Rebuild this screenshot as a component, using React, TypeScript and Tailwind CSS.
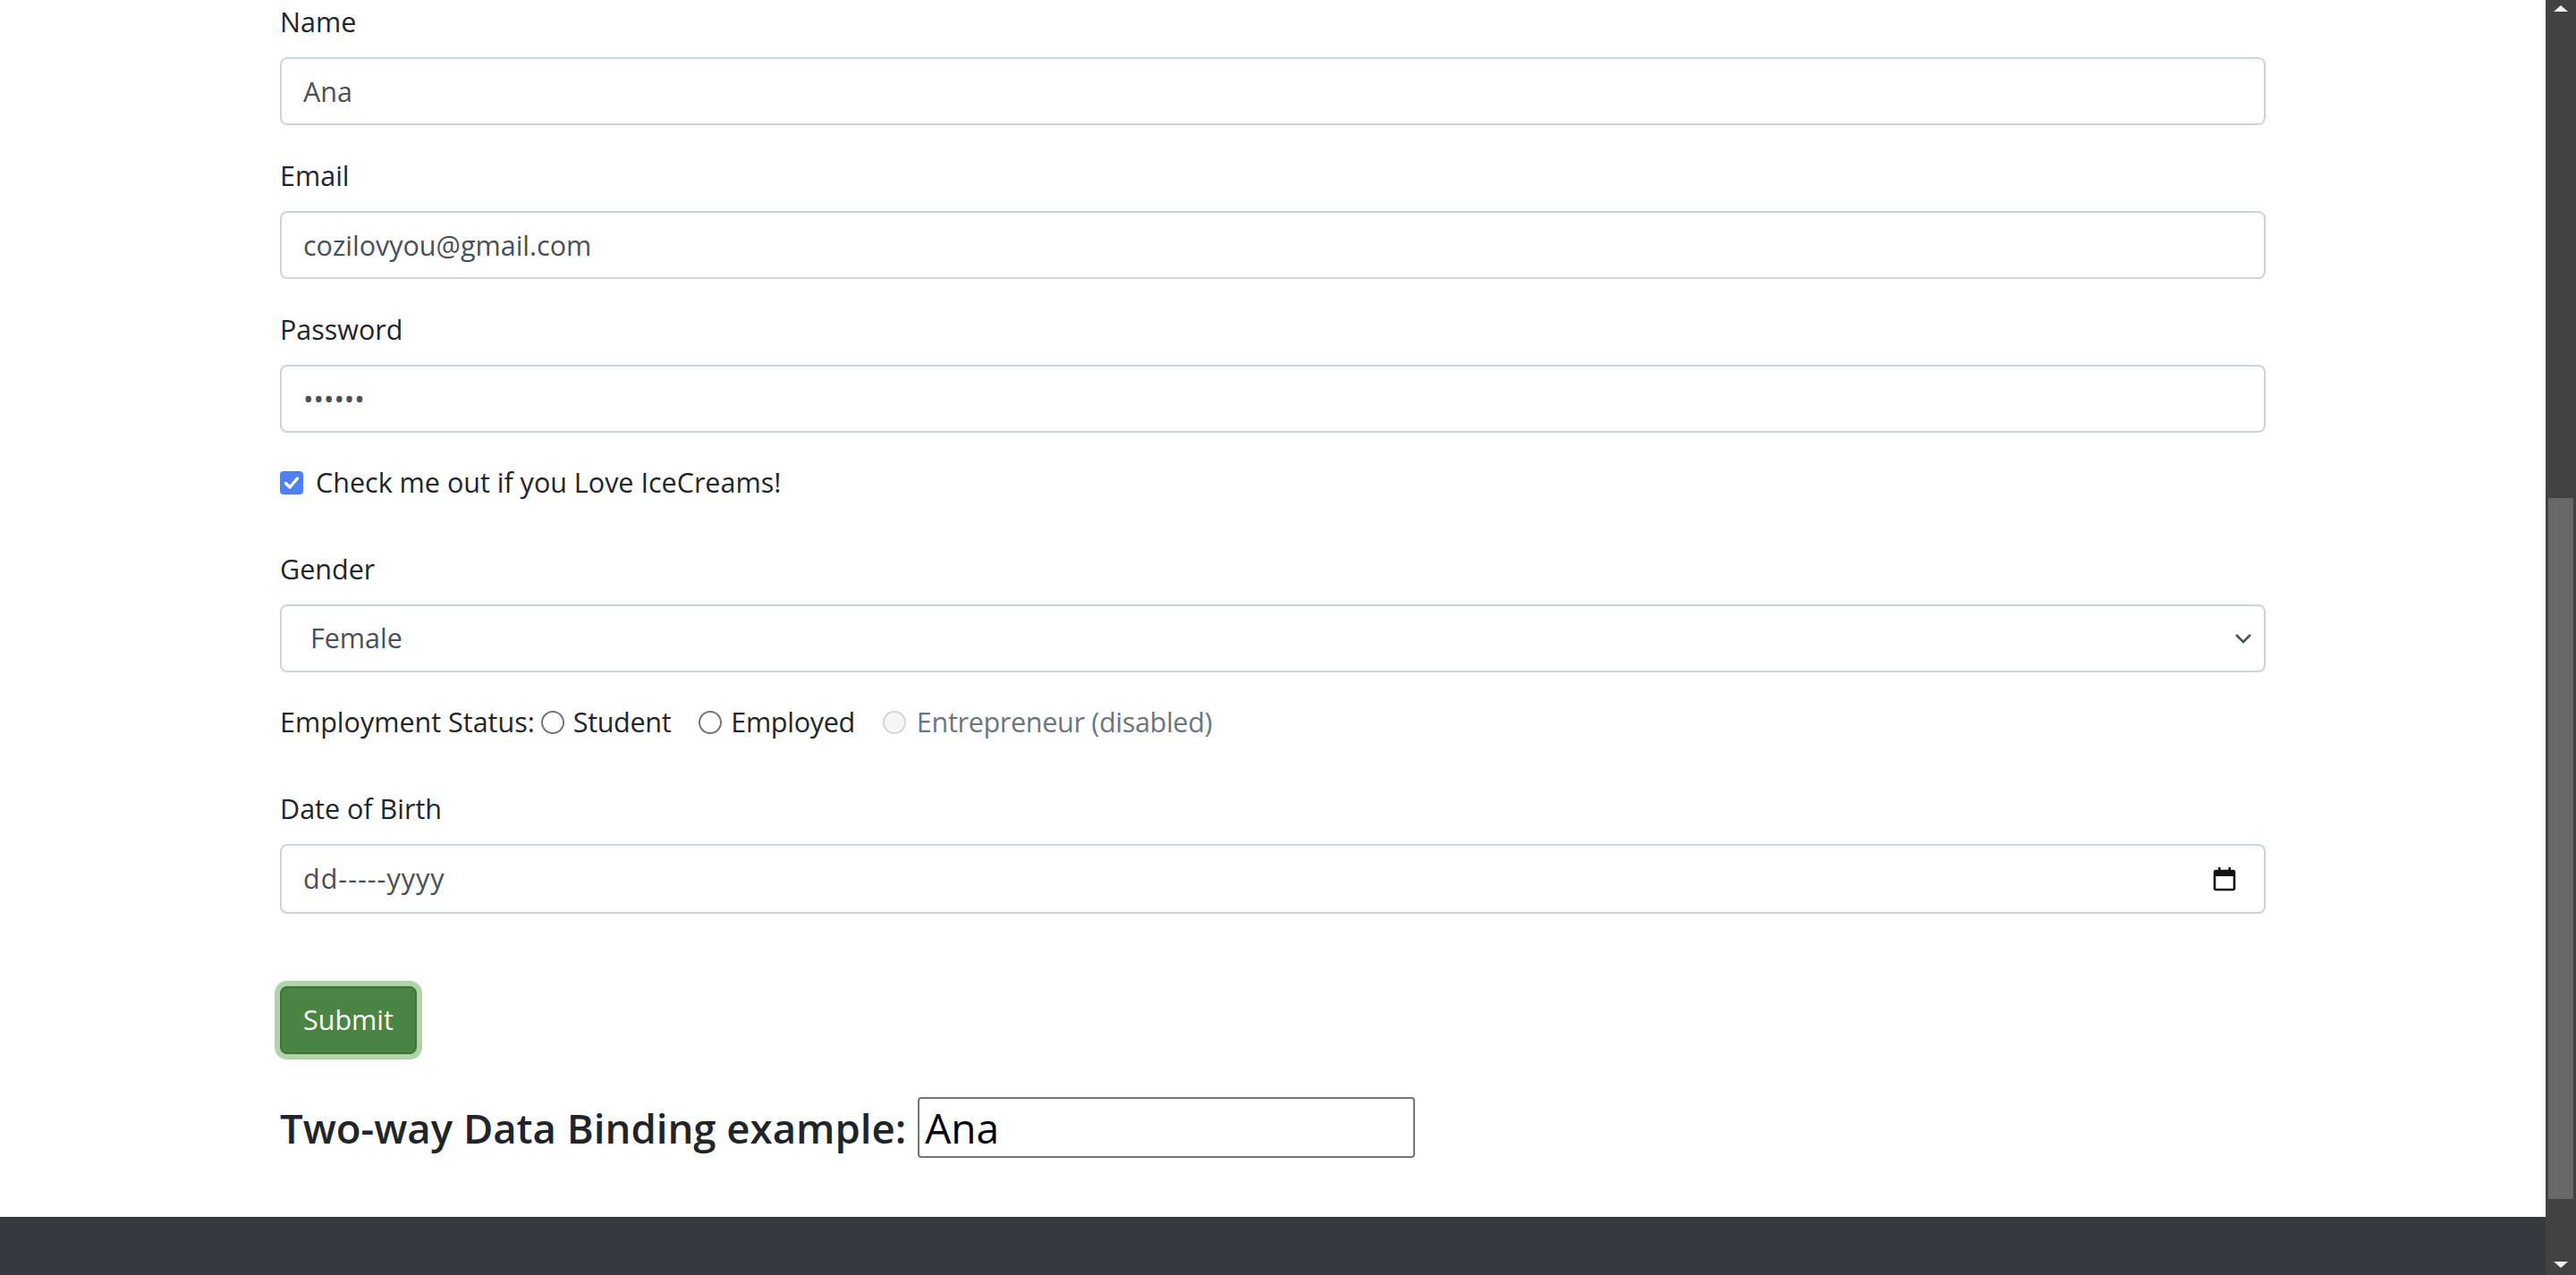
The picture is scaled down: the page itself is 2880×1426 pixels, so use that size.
import React from "react";

function Label({ children }: { children: React.ReactNode }) {
  return (
    <div className="h-[48px] leading-[48px] text-[30.5px] text-[#212529] mb-[16px]">{children}</div>
  );
}

function TextBox({ value, type = "text" }: { value: string; type?: string }) {
  return (
    <input
      readOnly
      type={type}
      value={value}
      className="block w-full h-[76px] px-[24px] border-2 border-[#ced4da] rounded-[8px] text-[30.5px] text-[#495057] bg-white outline-none"
    />
  );
}

function Radio({ disabled = false }: { disabled?: boolean }) {
  return disabled ? (
    <span className="inline-block w-[26px] h-[26px] rounded-full border-2 border-[#d6d6d6] bg-[#f6f6f6] shrink-0" />
  ) : (
    <span className="inline-block w-[26px] h-[26px] rounded-full border-2 border-[#767676] bg-white shrink-0" />
  );
}

export default function App() {
  return (
    <div className="flex h-[1426px] w-full overflow-hidden bg-white font-['Open_Sans',sans-serif]">
      <div className="flex flex-col flex-1 min-w-0">
        <div className="w-[2220px] mx-auto">
          <Label>Name</Label>
          <TextBox value="Ana" />

          <div className="mt-[32px]">
            <Label>Email</Label>
            <TextBox value="cozilovyou@gmail.com" />
          </div>

          <div className="mt-[32px]">
            <Label>Password</Label>
            <TextBox type="password" value="123456" />
          </div>

          <div className="mt-[32px] h-[48px] flex items-center">
            <span className="w-[26px] h-[26px] rounded-[4px] bg-[#4e7ff6] flex items-center justify-center shrink-0">
              <svg width="20" height="20" viewBox="0 0 20 20">
                <path d="M3.5 10.5 L8 15 L16.5 5" fill="none" stroke="white" strokeWidth="3.4" strokeLinecap="round" strokeLinejoin="round" />
              </svg>
            </span>
            <span className="ml-[14px] text-[30.5px] text-[#212529]">Check me out if you Love IceCreams!</span>
          </div>

          <div className="mt-[48px]">
            <Label>Gender</Label>
            <div className="h-[76px] border-2 border-[#ced4da] rounded-[8px] flex items-center justify-between pl-[32px] pr-[12px] text-[30.5px] text-[#495057]">
              <span>Female</span>
              <svg width="22" height="14" viewBox="0 0 22 14">
                <path d="M3 3 L11 11 L19 3" fill="none" stroke="#495057" strokeWidth="2.6" />
              </svg>
            </div>
          </div>

          <div className="mt-[32px] h-[48px] flex items-center text-[30.5px] text-[#212529]">
            <span>Employment Status:</span>
            <span className="ml-[7px] flex items-center">
              <Radio />
              <span className="ml-[10px] tracking-[-0.3px]">Student</span>
            </span>
            <span className="ml-[31px] flex items-center">
              <Radio />
              <span className="ml-[10px] tracking-[-0.3px]">Employed</span>
            </span>
            <span className="ml-[31px] flex items-center">
              <Radio disabled />
              <span className="ml-[12px] tracking-[-0.3px] text-[#6c757d]">Entrepreneur (disabled)</span>
            </span>
          </div>

          <div className="mt-[48px]">
            <Label>Date of Birth</Label>
            <div className="h-[78px] border-2 border-[#ced4da] rounded-[8px] flex items-center justify-between pl-[24px] pr-[30px] text-[30.5px] text-[#495057]">
              <span className="tracking-[1px]">dd-----yyyy</span>
              <svg width="28" height="30" viewBox="0 0 28 30">
                <rect x="3" y="6" width="22" height="21" rx="1.5" fill="none" stroke="#111" strokeWidth="2.6" />
                <rect x="3" y="6" width="22" height="6" fill="#111" />
                <rect x="7" y="2" width="2.6" height="6" fill="#111" />
                <rect x="18.4" y="2" width="2.6" height="6" fill="#111" />
              </svg>
            </div>
          </div>

          <div className="mt-[81px] flex">
            <button className="h-[76px] px-[24px] bg-[#4a8543] border-2 border-[#3f7439] rounded-[8px] text-[30.5px] text-white shadow-[0_0_0_6px_#b0d4a8]">
              Submit
            </button>
          </div>

          <div className="mt-[48px] flex items-center h-[68px]">
            <h3 className="text-[45.5px] font-semibold leading-[1.2] text-[#212529]">Two-way Data Binding example:</h3>
            <input
              readOnly
              value="Ana"
              className="ml-[13px] w-[556px] h-[68px] border-2 border-[#767676] rounded-[4px] px-[6px] text-[46px] text-black bg-white outline-none"
            />
          </div>
        </div>

        <div className="mt-auto h-[65px] bg-[#343a40]" />
      </div>

      <div className="w-[34px] shrink-0 bg-[#424242] flex flex-col items-center">
        <svg className="mt-[4px]" width="18" height="10" viewBox="0 0 18 10">
          <path d="M1 9 L9 2 L17 9 Z" fill="#f0f0f0" />
        </svg>
        <div className="mt-[543px] w-[28px] h-[784px] bg-[#686868]" />
        <svg className="mt-auto mb-[6px]" width="18" height="10" viewBox="0 0 18 10">
          <path d="M1 1 L9 8 L17 1 Z" fill="#f0f0f0" />
        </svg>
      </div>
    </div>
  );
}
